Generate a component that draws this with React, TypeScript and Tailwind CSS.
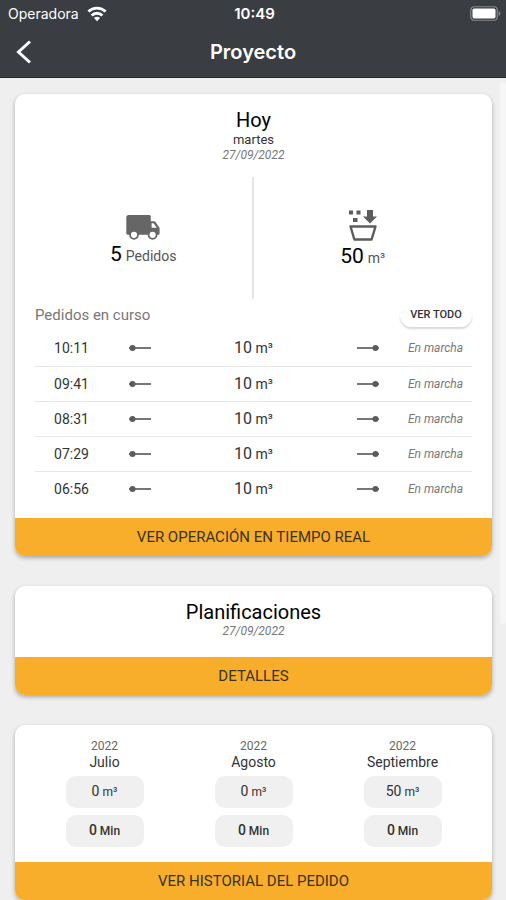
import type { ReactNode } from "react";

const orders = ["10:11", "09:41", "08:31", "07:29", "06:56"];

const months = [
  { year: 2022, name: "Julio", volume: 0, minutes: 0 },
  { year: 2022, name: "Agosto", volume: 0, minutes: 0 },
  { year: 2022, name: "Septiembre", volume: 50, minutes: 0 },
];

function WifiIcon() {
  return (
    <svg width="20" height="16" viewBox="0 0 20 16" fill="none" stroke="#fff" strokeWidth="2.8" aria-hidden="true">
      <path d="M1.4 5.6a12.4 12.4 0 0 1 17.2 0" />
      <path d="M4.6 9.4a7.8 7.8 0 0 1 10.8 0" />
      <path d="M10 15.2 6.9 12a4.4 4.4 0 0 1 6.2 0z" fill="#fff" stroke="none" />
    </svg>
  );
}

function BatteryIcon() {
  return (
    <svg width="31" height="15" viewBox="0 0 31 15" aria-hidden="true">
      <rect x="0.75" y="0.75" width="26.5" height="13.5" rx="3.5" fill="none" stroke="#85898c" strokeWidth="1.2" />
      <rect x="2.5" y="2.5" width="23" height="10" rx="1.8" fill="#fff" />
      <path d="M28.7 5v5c1-.4 1.6-1.4 1.6-2.5S29.7 5.4 28.700 5z" fill="#85898c" />
    </svg>
  );
}

function TruckIcon() {
  return (
    <svg width="34" height="26" viewBox="0 0 34 26" aria-hidden="true">
      <path
        d="M2.5 1h20.500c1 0 1.800.7 1.800 1.700v4.600h3.200c.7 0 1.300.3 1.700.9l3.600 5.200c.2.300.300.600.300 1V19.500c0 .8-.6 1.300-1.300 1.300H2.200C1 20.800.300 20 .300 19V3.200C.300 2 1.300 1 2.500 1z"
        fill="#666"
      />
      <path d="M25.600 9.200h2l3.200 4.600h-5.200z" fill="#fff" />
      <circle cx="8" cy="20.800" r="4" fill="#fff" stroke="#666" strokeWidth="1.800" />
      <circle cx="26.600" cy="20.800" r="4" fill="#fff" stroke="#666" strokeWidth="1.800" />
    </svg>
  );
}

function VolumeIcon() {
  return (
    <svg width="30" height="34" viewBox="0 0 30 34" fill="#5c5c5c" aria-hidden="true">
      <rect x="1" y="2.500" width="4" height="4" />
      <rect x="8.500" y="2.500" width="4" height="4" />
      <rect x="5" y="10" width="4.500" height="4" />
      <path d="M19 2h6v6.500h4L22 15.500 15 8.500h4z" />
      <path d="M2.500 18.500h25L23.600 31.500H6.400z" fill="none" stroke="#5c5c5c" strokeWidth="2.400" strokeLinejoin="round" />
    </svg>
  );
}

function Connector({ end = false }: { end?: boolean }) {
  return (
    <svg className="mx-auto block" width="22" height="6" viewBox="0 0 22 6" aria-hidden="true">
      <path d="M0 3h22" stroke="#777" strokeWidth="2" />
      <circle cx={end ? 18.5 : 3.5} cy="3" r="3" fill="#5c5c5c" />
    </svg>
  );
}

function Card({ action, children }: { action: string; children: ReactNode }) {
  return (
    <section className="overflow-hidden rounded-[10px] bg-white shadow-[0_2px_4px_rgba(0,0,0,0.3)]">
      {children}
      <button type="button" className="block h-[38px] w-full bg-[#f8ae2b] text-[15px] text-[#3a3222]">
        {action}
      </button>
    </section>
  );
}

export default function App() {
  return (
    <div className="min-h-screen bg-[#efefef] font-[Roboto,sans-serif] text-[#333]">
      <header className="border-b border-[#25282b] bg-[#3a3d41] font-[Inter,sans-serif] text-white">
        <div className="grid h-[27px] grid-cols-3 items-center pr-[5px] pl-2 text-sm">
          <div className="flex items-center gap-2">
            <span>Operadora</span>
            <WifiIcon />
          </div>
          <time className="text-center text-[15px] font-semibold">10:49</time>
          <div className="flex justify-end">
            <BatteryIcon />
          </div>
        </div>
        <div className="grid h-[50px] grid-cols-[40px_1fr_40px] items-center">
          <button type="button" aria-label="Atrás" className="flex h-full items-center pl-4">
            <svg width="16" height="24" viewBox="0 0 16 24" fill="none" stroke="#fff" strokeWidth="3" aria-hidden="true">
              <path d="M14 1.500 2.500 12 14 22.500" />
            </svg>
          </button>
          <h1 className="text-center text-xl font-semibold">Proyecto</h1>
        </div>
      </header>

      <div className="relative">
        <div className="absolute top-1 right-0 h-[542px] w-[6px] rounded-full bg-[#f6f6f6]" />
        <main className="flex flex-col gap-[30px] pt-4 pr-[14px] pl-[15px]">
          <Card action="VER OPERACIÓN EN TIEMPO REAL">
            <div className="px-5 pt-[14px] pb-3">
              <div className="text-center">
                <h2 className="text-xl leading-6 text-black">Hoy</h2>
                <p className="text-[13px] leading-4">martes</p>
                <p className="text-xs leading-[14px] text-[#777] italic">27/09/2022</p>
              </div>

              <div className="mt-[15px] grid h-[122px] grid-cols-2 divide-x-2 divide-[#e4e4e4]">
                <div className="flex flex-col items-center justify-center pt-2">
                  <TruckIcon />
                  <p className="flex items-baseline gap-1 text-sm leading-7 text-[#555]">
                    <span className="text-[21px] text-black">5</span> Pedidos
                  </p>
                </div>
                <div className="flex flex-col items-center justify-center pt-1">
                  <VolumeIcon />
                  <p className="flex items-baseline gap-1 text-sm leading-7 text-[#555]">
                    <span className="text-[21px] text-black">50</span> m³
                  </p>
                </div>
              </div>

              <div className="mt-1 flex h-6 items-center justify-between">
                <h3 className="text-[15px] text-[#777]">Pedidos en curso</h3>
                <button
                  type="button"
                  className="h-[23px] w-[72px] rounded-full bg-white text-[11px] font-medium text-[#333] shadow-[0_2px_2px_rgba(0,0,0,0.15)]"
                >
                  VER TODO
                </button>
              </div>

              <table className="mt-1 w-full table-fixed text-center">
                <colgroup>
                  <col className="w-[73px]" />
                  <col className="w-[63px]" />
                  <col />
                  <col className="w-[63px]" />
                  <col className="w-[73px]" />
                </colgroup>
                <tbody>
                  {orders.map((time) => (
                    <tr key={time} className="h-[35px] border-b border-[#e6e6e6] last:border-0">
                      <td className="text-sm">{time}</td>
                      <td>
                        <Connector />
                      </td>
                      <td className="text-sm">
                        <span className="text-base">10</span> m³
                      </td>
                      <td>
                        <Connector end />
                      </td>
                      <td className="text-xs text-[#777] italic">En marcha</td>
                    </tr>
                  ))}
                </tbody>
              </table>
            </div>
          </Card>

          <Card action="DETALLES">
            <div className="px-5 pt-[14px] pb-[19px] text-center">
              <h2 className="text-xl leading-6 text-black">Planificaciones</h2>
              <p className="text-xs leading-[14px] text-[#777] italic">27/09/2022</p>
            </div>
          </Card>

          <Card action="VER HISTORIAL DEL PEDIDO">
            <div className="grid grid-cols-3 px-[15px] pt-[13px] pb-[15px]">
              {months.map((month) => (
                <div key={month.name} className="flex flex-col items-center">
                  <p className="text-xs leading-4 text-[#666]">{month.year}</p>
                  <h3 className="text-sm leading-4">{month.name}</h3>
                  <p className="mt-[6px] h-8 w-[78px] rounded-[10px] bg-[#f0f0f0] text-center text-xs leading-8">
                    <span className="text-sm">{month.volume}</span> m³
                  </p>
                  <p className="mt-[7px] h-8 w-[78px] rounded-[10px] bg-[#f0f0f0] text-center text-xs leading-8 font-medium">
                    <span className="text-sm">{month.minutes}</span> Min
                  </p>
                </div>
              ))}
            </div>
          </Card>
        </main>
      </div>
    </div>
  );
}
